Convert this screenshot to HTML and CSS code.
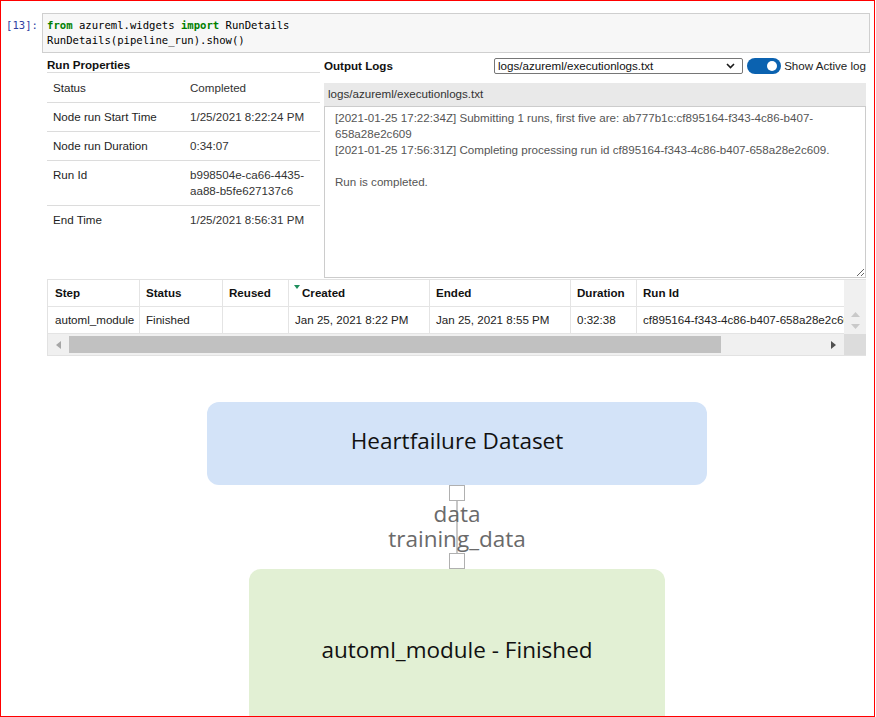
FILE: index.html
```html
<!DOCTYPE html>
<html>
<head>
<meta charset="utf-8">
<link rel="stylesheet" href="styles.css">
</head>
<body>
<div class="frame">
  <div class="cell">
    <div class="prompt">[13]:</div>
    <div class="input">
      <div class="code">
        <div class="line"><span class="kw">from</span><span> azureml.widgets </span><span class="kw">import</span><span> RunDetails</span></div>
        <div class="line">RunDetails(pipeline_run).show()</div>
      </div>
    </div>
  </div>

  <div class="widget">
    <div class="top">
      <section class="props">
        <div class="sec-title props-title">Run Properties</div>
        <table class="props-table">
          <colgroup><col class="col-label"><col class="col-value"></colgroup>
          <tr><td>Status</td><td class="val">Completed</td></tr>
          <tr><td>Node run Start Time</td><td class="val">1/25/2021 8:22:24 PM</td></tr>
          <tr><td>Node run Duration</td><td class="val">0:34:07</td></tr>
          <tr><td>Run Id</td><td class="val">b998504e-ca66-4435-aa88-b5fe627137c6</td></tr>
          <tr class="last"><td>End Time</td><td class="val">1/25/2021 8:56:31 PM</td></tr>
        </table>
      </section>
      <section class="logs">
        <div class="logs-head">
          <div class="sec-title logs-title">Output Logs</div>
          <div class="select">
            <span>logs/azureml/executionlogs.txt</span>
            <svg class="chev" width="9" height="6" viewBox="0 0 9 6"><polyline points="1,1 4.5,4.5 8,1" fill="none" stroke="#1a1a1a" stroke-width="1.6"/></svg>
          </div>
          <div class="toggle"><span class="knob"></span></div>
          <span class="toggle-label">Show Active log</span>
        </div>
        <div class="log-title">logs/azureml/executionlogs.txt</div>
        <textarea class="log-box" readonly>[2021-01-25 17:22:34Z] Submitting 1 runs, first five are: ab777b1c:cf895164-f343-4c86-b407-
658a28e2c609
[2021-01-25 17:56:31Z] Completing processing run id cf895164-f343-4c86-b407-658a28e2c609.

Run is completed.</textarea>
      </section>
    </div>

    <div class="grid">
      <div class="grid-main">
        <div class="grid-rows">
          <div class="row head">
            <div class="c first">Step</div>
            <div class="c">Status</div>
            <div class="c">Reused</div>
            <div class="c"><span class="sort"></span>Created</div>
            <div class="c">Ended</div>
            <div class="c">Duration</div>
            <div class="c lastc">Run Id</div>
          </div>
          <div class="row">
            <div class="c first">automl_module</div>
            <div class="c">Finished</div>
            <div class="c"></div>
            <div class="c">Jan 25, 2021 8:22 PM</div>
            <div class="c">Jan 25, 2021 8:55 PM</div>
            <div class="c">0:32:38</div>
            <div class="c lastc">cf895164-f343-4c86-b407-658a28e2c609</div>
          </div>
        </div>
        <div class="vscroll">
          <svg width="9" height="5" viewBox="0 0 9 5"><polygon points="0,5 4.5,0 9,5" fill="#c9c9c9"/></svg>
          <svg width="9" height="5" viewBox="0 0 9 5"><polygon points="0,0 9,0 4.5,5" fill="#c9c9c9"/></svg>
        </div>
      </div>
      <div class="hscroll">
        <div class="track">
          <div class="arrow-btn"><svg width="5" height="8" viewBox="0 0 5 8"><polygon points="5,0 5,8 0,4" fill="#a6a6a6"/></svg></div>
          <div class="thumb"></div>
          <div class="rest"></div>
          <div class="arrow-btn"><svg width="5" height="8" viewBox="0 0 5 8"><polygon points="0,0 0,8 5,4" fill="#505050"/></svg></div>
        </div>
        <div class="corner"></div>
      </div>
    </div>
  </div>

  <div class="diagram">
    <div class="node dataset">Heartfailure Dataset</div>
    <div class="edge">
      <div class="port"></div>
      <div class="labels"><span>data</span><span>training_data</span></div>
      <div class="port"></div>
    </div>
    <div class="node step">automl_module - Finished</div>
  </div>
</div>
</body>
</html>
```

FILE: styles.css
```css
* { box-sizing: border-box; }
html, body { margin: 0; padding: 0; background: #fff; }
body {
  font-family: "Liberation Sans", Arial, sans-serif;
  font-size: 11.6px;
  color: #222;
}
.frame {
  width: 875px;
  height: 717px;
  border: 1px solid #ff0000;
  overflow: hidden;
}

/* notebook cell */
.cell { display: flex; margin-top: 12px; }
.prompt {
  width: 41px;
  flex: none;
  text-align: right;
  padding: 5px 4px 0 0;
  font-family: "DejaVu Sans Mono", monospace;
  font-size: 10.6px;
  line-height: 15px;
  color: #303f9f;
}
.input {
  width: 828px;
  border: 1px solid #cfcfcf;
  background: #f7f7f7;
  padding: 4px 4px 4px 4px;
}
.code {
  font-family: "DejaVu Sans Mono", monospace;
  font-size: 10.6px;
  line-height: 15px;
  color: #000;
}
.line { white-space: pre; height: 15px; }
.kw { color: #008000; font-weight: bold; }

/* widget */
.widget { margin: 4px 0 0 46px; width: 819px; }
.top { display: flex; gap: 4px; height: 221px; }
.sec-title { font-weight: bold; color: #111; line-height: 16px; }

.props { width: 273px; flex: none; }
.props-title { border-bottom: 1px solid #dcdcdc; line-height: 15px; }
.props-table { width: 273px; border-collapse: collapse; table-layout: fixed; margin-top: 1px; }
.col-label { width: 137px; }
.col-value { width: 136px; }
.props-table td {
  padding: 6px 6px;
  line-height: 16px;
  vertical-align: top;
  border-bottom: 1px solid #dcdcdc;
  color: #1e1e1e;
}
.props-table td.val { color: #333; }
.props-table tr.last td { border-bottom: none; }

.logs { width: 542px; flex: none; display: flex; flex-direction: column; }
.logs-head { display: flex; align-items: center; height: 17px; margin-bottom: 9px; }
.logs-title { width: 170px; flex: none; }
.select {
  width: 250px;
  height: 16px;
  border: 1px solid #767676;
  border-radius: 2px;
  display: flex;
  align-items: center;
  justify-content: space-between;
  padding: 0 7px 0 3px;
  color: #111;
  line-height: 14px;
}
.chev { display: block; }
.toggle {
  margin-left: 4px;
  width: 34px;
  height: 16px;
  border-radius: 8px;
  background: #0b62b0;
  display: flex;
  align-items: center;
  justify-content: flex-end;
  padding-right: 4px;
}
.knob { width: 10px; height: 10px; border-radius: 50%; background: #fff; }
.toggle-label { margin-left: 3px; color: #222; white-space: nowrap; }

.log-title {
  height: 23px;
  line-height: 22px;
  background: #e9e9e9;
  padding-left: 4px;
  color: #333;
}
.log-box {
  display: block;
  width: 542px;
  height: 172px;
  margin: 0;
  border: 1px solid #cccccc;
  padding: 3px 10px;
  font-family: "Liberation Sans", Arial, sans-serif;
  font-size: 11.6px;
  line-height: 16px;
  color: #555;
  background: #fff;
  resize: both;
  outline: none;
}

/* grid */
.grid {
  margin-top: 1px;
  border: 1px solid #e2e2e2;
  background: #f0f0f0;
}
.grid-main { display: flex; }
.grid-rows { width: 796px; flex: none; }
.row {
  display: grid;
  grid-template-columns: 92px 83px 66px 141px 141px 66px 207px;
  height: 27px;
  background: #fff;
}
.c {
  border-right: 1px solid #e4e4e4;
  border-bottom: 1px solid #e4e4e4;
  padding: 0 6px;
  line-height: 26px;
  white-space: nowrap;
  overflow: hidden;
  color: #222;
}
.c.first { padding-left: 7px; }
.c.lastc { border-right: none; }
.row.head .c { font-weight: bold; color: #111; }
.sort {
  display: inline-block;
  width: 0;
  height: 0;
  border-left: 3.5px solid transparent;
  border-right: 3.5px solid transparent;
  border-top: 4px solid #1e8e5c;
  vertical-align: top;
  margin: 5px 2px 0 -1px;
}
.vscroll {
  width: 22px;
  flex: none;
  background: #f0f0f0;
  display: flex;
  flex-direction: column;
  align-items: center;
  justify-content: flex-end;
  gap: 7px;
  padding-bottom: 5px;
}
.vscroll svg { display: block; }
.hscroll { display: flex; height: 21px; }
.track {
  width: 796px;
  flex: none;
  display: flex;
  align-items: center;
  padding: 2px 0;
}
.arrow-btn {
  width: 21px;
  height: 17px;
  flex: none;
  display: flex;
  align-items: center;
  justify-content: center;
}
.arrow-btn svg { display: block; }
.thumb { width: 652px; height: 17px; background: #c1c1c1; flex: none; }
.rest { flex: 1; }
.corner { width: 22px; flex: none; background: #dcdcdc; }

/* diagram */
.diagram {
  margin: 46px 0 0 46px;
  width: 820px;
  display: flex;
  flex-direction: column;
  align-items: center;
  font-family: "Open Sans", "Noto Sans", sans-serif;
}
.node {
  display: flex;
  align-items: center;
  justify-content: center;
  border-radius: 12px;
  color: #111;
  font-size: 22.5px;
  font-weight: 500;
}
.dataset { width: 500px; height: 83px; background: #d3e3f8; padding-bottom: 6px; }
.step { width: 416px; height: 162px; background: #e2f0d4; flex: none; padding-bottom: 2px; }
.edge {
  display: flex;
  flex-direction: column;
  align-items: center;
  width: 16px;
  background: linear-gradient(#c8c8c8, #c8c8c8) no-repeat center / 2px 100%;
}
.port {
  width: 16px;
  height: 16px;
  flex: none;
  border: 1px solid #b0b0b0;
  background: #fff;
}
.labels {
  display: flex;
  flex-direction: column;
  align-items: center;
  height: 52px;
  font-size: 22.5px;
  line-height: 25px;
  color: #6a6a6a;
  white-space: nowrap;
}
```
